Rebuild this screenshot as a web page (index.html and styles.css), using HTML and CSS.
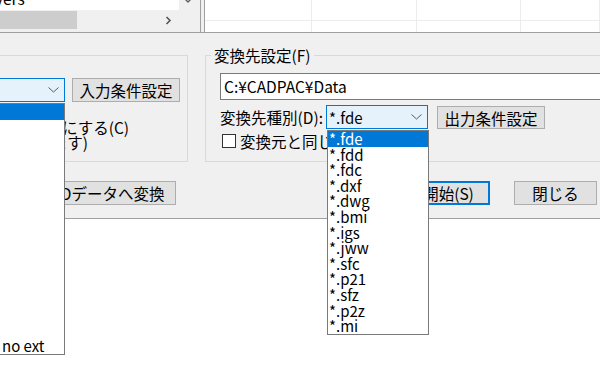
FILE: index.html
```html
<!DOCTYPE html>
<html lang="ja">
<head>
<meta charset="utf-8">
<title>CADデータ変換</title>
<link rel="stylesheet" href="styles.css">
</head>
<body>
<div class="top">
  <div class="tree">
    <div class="tree-main">
      <div class="tree-list"><div class="tree-row">Drivers</div></div>
      <div class="vscroll">
        <svg width="21" height="10" viewBox="0 0 21 10"><path d="M5.5 -1.5 L9 2 L12.5 -1.5" fill="none" stroke="#606060" stroke-width="1.4"/></svg>
      </div>
    </div>
    <div class="hscroll">
      <div class="track"><div class="thumb"></div></div>
      <div class="harrow">
        <svg width="21" height="21" viewBox="0 0 21 21"><path d="M8.5 7 L12 10.5 L8.5 14" fill="none" stroke="#555" stroke-width="1.6"/></svg>
      </div>
      <div class="corner"></div>
    </div>
  </div>
  <div class="split"></div>
  <div class="grid">
    <div class="cell head"></div><div class="cell head"></div><div class="cell head"></div><div class="cell head"></div>
    <div class="cell"></div><div class="cell"></div><div class="cell"></div><div class="cell"></div>
  </div>
</div>

<div class="dialog">
  <div class="groups">
    <fieldset class="group group-in">
      <legend>変換元設定(I)</legend>
      <div class="group-body">
        <div class="row row-end">
          <div class="combo combo-in">
            <span class="combo-value">*.fde</span>
            <svg class="chev" width="11" height="6" viewBox="0 0 11 6"><path d="M0.5 0.5 L5.5 5 L10.5 0.5" fill="none" stroke="#5a5a5a" stroke-width="1"/></svg>
          </div>
          <button class="btn btn-cond">入力条件設定</button>
        </div>
        <div class="check-row check-multi">
          <span class="box"></span>
          <span class="check-label">出力先フォルダを変換元と同じにする(C)<br>(既存のファイルは上書きされます)</span>
        </div>
      </div>
    </fieldset>

    <fieldset class="group group-out">
      <legend>変換先設定(F)</legend>
      <div class="group-body">
        <div class="path">C:¥CADPAC¥Data</div>
        <div class="row">
          <span class="label">変換先種別(D):</span>
          <div class="combo combo-out">
            <span class="combo-value">*.fde</span>
            <svg class="chev" width="11" height="6" viewBox="0 0 11 6"><path d="M0.5 0.5 L5.5 5 L10.5 0.5" fill="none" stroke="#5a5a5a" stroke-width="1"/></svg>
          </div>
          <button class="btn btn-cond btn-out">出力条件設定</button>
        </div>
        <div class="check-row">
          <span class="box"></span>
          <span class="check-label">変換元と同じフォルダ</span>
        </div>
      </div>
    </fieldset>
  </div>

  <div class="actions">
    <button class="btn btn-convert">CADデータへ変換</button>
    <button class="btn btn-start">開始(S)</button>
    <button class="btn btn-close">閉じる</button>
  </div>
</div>

<ul class="dropdown dropdown-in">
  <li class="selected">*.fde</li>
  <li>*.fdd</li>
  <li>*.fdc</li>
  <li>*.dxf</li>
  <li>*.dwg</li>
  <li>*.bmi</li>
  <li>*.igs</li>
  <li>*.jww</li>
  <li>*.sfc</li>
  <li>*.p21</li>
  <li>*.sfz</li>
  <li>*.p2z</li>
  <li>*.mi</li>
  <li>*.jwc</li>
  <li>*.dwf</li>
  <li class="noext">no ext</li>
</ul>

<ul class="dropdown dropdown-out">
  <li class="selected">*.fde</li>
  <li>*.fdd</li>
  <li>*.fdc</li>
  <li>*.dxf</li>
  <li>*.dwg</li>
  <li>*.bmi</li>
  <li>*.igs</li>
  <li>*.jww</li>
  <li>*.sfc</li>
  <li>*.p21</li>
  <li>*.sfz</li>
  <li>*.p2z</li>
  <li>*.mi</li>
</ul>
</body>
</html>
```

FILE: styles.css
```css
html, body {
  margin: 0;
  padding: 0;
  overflow: hidden;
}

body {
  width: 600px;
  height: 370px;
  position: relative;
  background: #fff;
  color: #000;
  font-family: "Noto Sans CJK JP", "Noto Sans", sans-serif;
  font-size: 15.5px;
}

/* ---------- top panes ---------- */
.top {
  display: flex;
  height: 32px;
  border-bottom: 1px solid #a0a0a0;
  background: #f0f0f0;
}

.tree {
  width: 201px;
  box-sizing: border-box;
  border-right: 1px solid #a0a0a0;
  display: flex;
  flex-direction: column;
}

.tree-main {
  display: flex;
  height: 10px;
}

.tree-list {
  flex: 1;
  overflow: hidden;
  background: #fff;
}

.tree-row {
  margin: -12px 0 0 -26px;
  line-height: 20px;
  white-space: nowrap;
}

.vscroll {
  width: 21px;
  background: #f0f0f0;
  overflow: hidden;
}

.vscroll svg,
.harrow svg {
  display: block;
}

.hscroll {
  display: flex;
  height: 22px;
  background: #f0f0f0;
}

.track {
  flex: 1;
}

.thumb {
  width: 77px;
  height: 18px;
  margin-top: 1px;
  background: #cdcdcd;
}

.harrow,
.corner {
  width: 21px;
}

.split {
  width: 3px;
}

.grid {
  flex: 1;
  background: #fff;
  border-left: 1px solid #a0a0a0;
  display: grid;
  grid-template-columns: 107px 105px 104px 1fr;
  grid-template-rows: 21px 1fr;
}

.cell {
  border-right: 1px solid #ececec;
}

.cell.head {
  border-bottom: 1px solid #ececec;
}

/* ---------- dialog ---------- */
.dialog {
  background: #f0f0f0;
  padding: 12px 0 13px;
  border-bottom: 1px solid #a0a0a0;
}

.groups {
  display: flex;
  gap: 17px;
}

.group {
  box-sizing: border-box;
  height: 117px;
  margin: 0;
  padding: 0;
  min-width: 0;
  border: 1px solid #d9d9d9;
  flex: none;
}

.group legend {
  margin-left: 5px;
  padding: 0 3px;
  line-height: 20px;
}

.group-in {
  width: 378px;
  margin-left: -190px;
}

.group-out {
  width: 420px;
}

.group-in .group-body {
  padding: 13px 7px 0 15px;
}

.group-out .group-body {
  padding: 8px 0 0 14px;
}

.row {
  display: flex;
  align-items: center;
}

.row-end {
  justify-content: flex-end;
  gap: 7px;
}

.combo {
  box-sizing: border-box;
  height: 24px;
  border: 1px solid #0078d7;
  background: #e5f1fb;
  display: flex;
  align-items: center;
  justify-content: space-between;
  padding: 0 5px 0 2px;
  font-size: 15px;
}

.combo-in {
  width: 201px;
}

.combo-out {
  width: 102px;
}

.chev {
  display: block;
}

.btn {
  box-sizing: border-box;
  height: 24px;
  margin: 0;
  padding: 0;
  border: 1px solid #adadad;
  background: #e1e1e1;
  color: #000;
  font: inherit;
  line-height: 22px;
}

.btn-cond {
  width: 108px;
}

.btn-out {
  height: 23px;
  margin-left: 9px;
  align-self: flex-end;
}

.label {
  width: 106px;
}

.path {
  box-sizing: border-box;
  width: 420px;
  height: 27px;
  border: 1px solid #7a7a7a;
  background: #fff;
  padding-left: 3px;
  line-height: 25px;
  margin-bottom: 5px;
}

.check-row {
  display: flex;
  align-items: center;
  gap: 4px;
  height: 19px;
  margin-top: 2px;
  padding-left: 2px;
}

.box {
  box-sizing: border-box;
  width: 14px;
  height: 14px;
  border: 1px solid #333;
  background: #fff;
  flex: none;
}

.check-multi {
  align-items: flex-start;
  height: auto;
  margin-top: 18px;
  padding-left: 0;
  gap: 5px;
}

.check-multi .box {
  margin-top: 1px;
}

.check-multi .check-label {
  line-height: 15px;
  white-space: nowrap;
}

.actions {
  display: flex;
  height: 24px;
  margin-top: 19px;
  padding: 0 3px 0 30px;
}

.btn-convert {
  width: 146px;
}

.btn-start {
  width: 83px;
  margin-left: auto;
  border: 2px solid #0078d7;
  line-height: 20px;
}

.btn-close {
  width: 83px;
  margin-left: 24px;
}

/* ---------- open drop-down lists ---------- */
.dropdown {
  position: absolute;
  margin: 0;
  padding: 0;
  list-style: none;
  background: #fff;
  border: 1px solid #7a7a7a;
  box-sizing: border-box;
  font-size: 15px;
}

.dropdown li {
  height: 15.6px;
  line-height: 15.6px;
  padding-left: 1px;
  white-space: nowrap;
}

.dropdown li.selected {
  background: #0078d7;
  color: #fff;
}

.dropdown-in {
  left: -48px;
  top: 103px;
  width: 113px;
}

.dropdown-in li {
  padding-left: 3px;
}

.dropdown-in li.noext {
  padding-left: 49px;
}

.dropdown-out {
  left: 327px;
  top: 130px;
  width: 102px;
}
```
